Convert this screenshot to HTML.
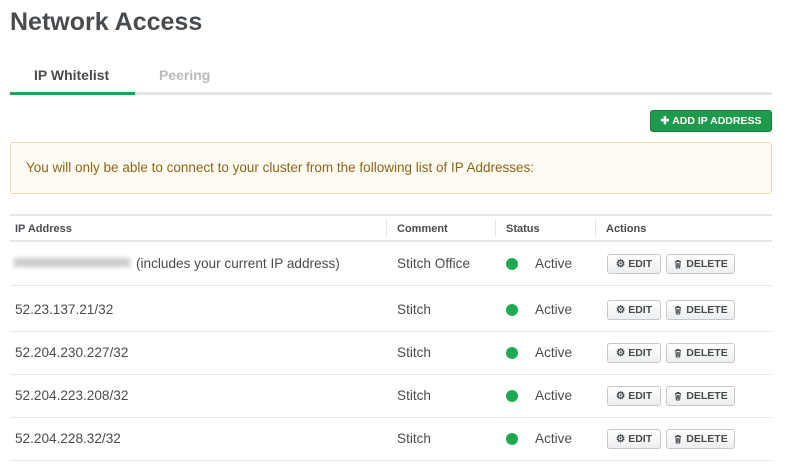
<!DOCTYPE html><html><head><style>
*{margin:0;padding:0;box-sizing:border-box}
body{width:787px;height:471px;background:#fff;font-family:"Liberation Sans",sans-serif;color:#494c4f;position:relative;overflow:hidden}
.a{position:absolute;white-space:nowrap}
h1{position:absolute;left:10px;top:8px;font-size:25px;font-weight:bold;color:#494c4f}
.btn{position:absolute;height:20px;border:1px solid #c5c8ca;border-radius:3px;background:linear-gradient(#fff,#eceeef);font-size:10.5px;font-weight:bold;color:#494c4f;display:flex;align-items:center;justify-content:center;gap:3px}
.dot{position:absolute;width:12px;height:12px;border-radius:50%;background:#1eaa50}
.hl{position:absolute;left:10px;width:762px;height:1px;background:#e4e6e7}
.td{position:absolute;font-size:13.6px;white-space:nowrap}
</style></head><body>
<svg width="0" height="0" style="position:absolute"><defs><symbol id="tr" viewBox="0 0 10 10"><path d="M2 2.5h6M4 2.5V1.5h2v1M2.8 2.5l.5 6.5h3.4l.5-6.5M4.3 4v4M5.7 4v4" fill="none" stroke="#494c4f" stroke-width="1"/></symbol></defs></svg>
<h1>Network Access</h1>
<div class="a" style="left:34px;top:67px;font-size:14px;font-weight:bold">IP Whitelist</div>
<div class="a" style="left:159px;top:67px;font-size:14px;font-weight:bold;color:#b8bbbd">Peering</div>
<div class="a" style="left:10px;top:92px;width:762px;height:3px;background:#e4e6e7"></div>
<div class="a" style="left:10px;top:92px;width:125px;height:3px;background:#20a350"></div>
<div class="a" style="left:650px;top:110px;width:122px;height:22px;background:#1d9a4b;border:1px solid #17823e;border-radius:3px;color:#fff;font-size:10.5px;font-weight:bold;display:flex;align-items:center;justify-content:center">✚&nbsp;ADD IP ADDRESS</div>
<div class="a" style="left:10px;top:142px;width:762px;height:52px;background:#fefbf3;border:1px solid #f0dcb4;border-radius:2px"></div>
<div class="a" style="left:26px;top:160px;font-size:13.5px;color:#8d6418">You will only be able to connect to your cluster from the following list of IP Addresses:</div>
<div class="a" style="left:10px;top:214px;width:762px;height:2px;background:#e4e6e7"></div>
<div class="a" style="left:15px;top:223px;font-size:11px;font-weight:bold">IP Address</div>
<div class="a" style="left:397px;top:223px;font-size:11px;font-weight:bold">Comment</div>
<div class="a" style="left:506px;top:223px;font-size:11px;font-weight:bold">Status</div>
<div class="a" style="left:606px;top:223px;font-size:11px;font-weight:bold">Actions</div>
<div class="a" style="left:386px;top:219px;width:1px;height:18px;background:#e4e6e7"></div>
<div class="a" style="left:495px;top:219px;width:1px;height:18px;background:#e4e6e7"></div>
<div class="a" style="left:595px;top:219px;width:1px;height:18px;background:#e4e6e7"></div>
<div class="a" style="left:10px;top:240px;width:762px;height:2px;background:#e4e6e7"></div>

<div class="a" style="left:14px;top:258px;width:116px;height:9px;background:#c9cbcd;filter:blur(2px)"></div>
<div class="td" style="left:136px;top:256px">(includes your current IP address)</div>
<div class="td" style="left:397px;top:256px">Stitch Office</div>
<div class="dot" style="left:506px;top:258px"></div><div class="td" style="left:535px;top:256px">Active</div>
<div class="btn" style="left:607px;top:254px;width:54px">⚙ EDIT</div><div class="btn" style="left:666px;top:254px;width:69px"><svg width="10" height="10"><use href="#tr"/></svg>DELETE</div>
<div class="hl" style="top:285px"></div>

<div class="td" style="left:15px;top:302px">52.23.137.21/32</div>
<div class="td" style="left:397px;top:302px">Stitch</div>
<div class="dot" style="left:506px;top:304px"></div><div class="td" style="left:535px;top:302px">Active</div>
<div class="btn" style="left:607px;top:300px;width:54px">⚙ EDIT</div><div class="btn" style="left:666px;top:300px;width:69px"><svg width="10" height="10"><use href="#tr"/></svg>DELETE</div>
<div class="hl" style="top:331px"></div>

<div class="td" style="left:15px;top:345px">52.204.230.227/32</div>
<div class="td" style="left:397px;top:345px">Stitch</div>
<div class="dot" style="left:506px;top:347px"></div><div class="td" style="left:535px;top:345px">Active</div>
<div class="btn" style="left:607px;top:343px;width:54px">⚙ EDIT</div><div class="btn" style="left:666px;top:343px;width:69px"><svg width="10" height="10"><use href="#tr"/></svg>DELETE</div>
<div class="hl" style="top:374px"></div>

<div class="td" style="left:15px;top:388px">52.204.223.208/32</div>
<div class="td" style="left:397px;top:388px">Stitch</div>
<div class="dot" style="left:506px;top:390px"></div><div class="td" style="left:535px;top:388px">Active</div>
<div class="btn" style="left:607px;top:386px;width:54px">⚙ EDIT</div><div class="btn" style="left:666px;top:386px;width:69px"><svg width="10" height="10"><use href="#tr"/></svg>DELETE</div>
<div class="hl" style="top:417px"></div>

<div class="td" style="left:15px;top:431px">52.204.228.32/32</div>
<div class="td" style="left:397px;top:431px">Stitch</div>
<div class="dot" style="left:506px;top:433px"></div><div class="td" style="left:535px;top:431px">Active</div>
<div class="btn" style="left:607px;top:429px;width:54px">⚙ EDIT</div><div class="btn" style="left:666px;top:429px;width:69px"><svg width="10" height="10"><use href="#tr"/></svg>DELETE</div>
<div class="hl" style="top:460px"></div>
</body></html>
